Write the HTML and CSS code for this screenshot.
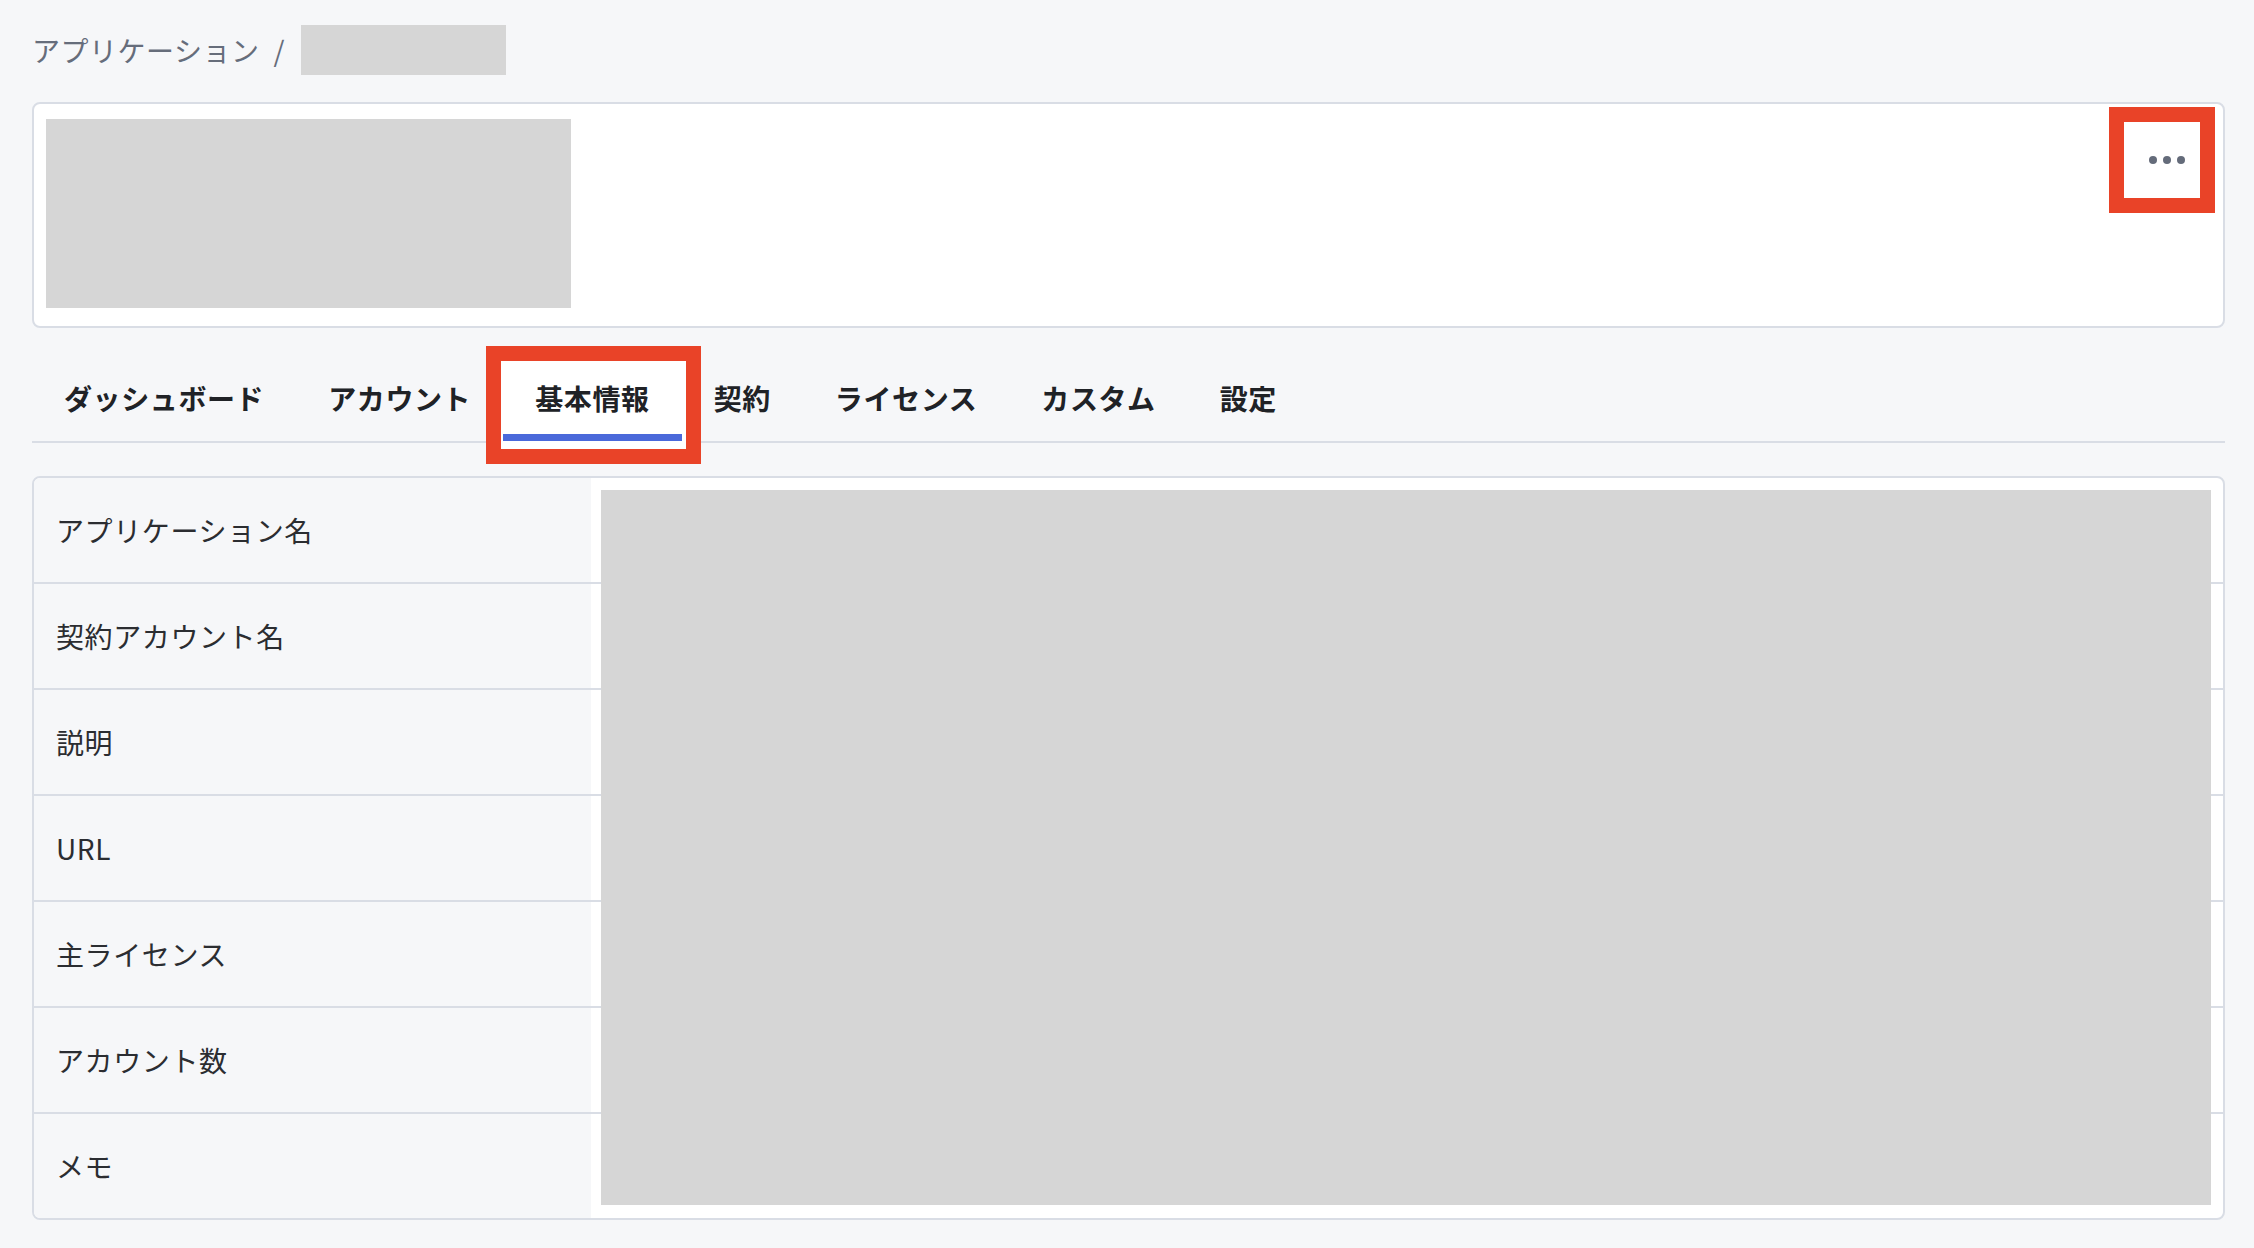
FILE: index.html
```html
<!DOCTYPE html>
<html lang="ja">
<head>
    <meta charset="UTF-8">
    <meta name="viewport" content="width=device-width, initial-scale=1.0">
    <title>アプリケーション - 基本情報</title>
    <link rel="stylesheet" href="styles.css">
</head>
<body>
    <div class="page">
        <nav class="breadcrumb">
            <a href="#" class="crumb">アプリケーション</a>
            <span class="sep">/</span>
            <span class="redacted crumb-name"></span>
        </nav>

        <div class="app-header">
            <div class="redacted app-logo"></div>
            <button class="more-btn" aria-label="その他">
                <svg width="36" height="10" viewBox="0 0 36 10">
                    <circle cx="4" cy="5" r="4" />
                    <circle cx="18" cy="5" r="4" />
                    <circle cx="32" cy="5" r="4" />
                </svg>
            </button>
        </div>

        <ul class="tabs">
            <li class="tab">ダッシュボード</li>
            <li class="tab">アカウント</li>
            <li class="tab active">基本情報</li>
            <li class="tab">契約</li>
            <li class="tab">ライセンス</li>
            <li class="tab">カスタム</li>
            <li class="tab">設定</li>
        </ul>

        <div class="info-table">
            <div class="info-row"><div class="info-label">アプリケーション名</div><div class="info-value"></div></div>
            <div class="info-row"><div class="info-label">契約アカウント名</div><div class="info-value"></div></div>
            <div class="info-row"><div class="info-label">説明</div><div class="info-value"></div></div>
            <div class="info-row"><div class="info-label">URL</div><div class="info-value"></div></div>
            <div class="info-row"><div class="info-label">主ライセンス</div><div class="info-value"></div></div>
            <div class="info-row"><div class="info-label">アカウント数</div><div class="info-value"></div></div>
            <div class="info-row"><div class="info-label">メモ</div><div class="info-value"></div></div>
            <div class="redacted values-cover"></div>
        </div>
    </div>
</body>
</html>
```

FILE: styles.css
```css
:root {
    --bg: #f6f7f9;
    --card: #ffffff;
    --border: #d9dde5;
    --redacted: #d6d6d6;
    --text: #2b2d31;
    --text-gray: #666d7b;
    --accent: #4b69da;
    --mark: #e94328;
}

* {
    margin: 0;
    padding: 0;
    box-sizing: border-box;
}

body {
    font-family: "Noto Sans CJK JP", "Noto Sans", sans-serif;
    background-color: var(--bg);
    color: var(--text);
    min-height: 100vh;
}

.page {
    padding: 0 29px 0 32px;
}

.redacted {
    background-color: var(--redacted);
}

/* breadcrumb */
.breadcrumb {
    display: flex;
    align-items: center;
    gap: 14px;
    height: 100px;
    font-size: 28px;
    line-height: 40px;
    letter-spacing: 0.5px;
    color: var(--text-gray);
}

.crumb {
    color: var(--text-gray);
    text-decoration: none;
}

.crumb-name {
    width: 205px;
    height: 50px;
    margin-left: 2px;
}

/* header card */
.app-header {
    display: flex;
    justify-content: space-between;
    align-items: flex-start;
    height: 226px;
    margin-top: 2px;
    padding: 15px 23px 18px 12px;
    background-color: var(--card);
    border: 2px solid var(--border);
    border-radius: 8px;
}

.app-logo {
    width: 525px;
    height: 189px;
}

.more-btn {
    display: flex;
    align-items: center;
    justify-content: center;
    width: 76px;
    height: 76px;
    margin-top: 3px;
    padding-left: 10px;
    background-color: var(--card);
    border: none;
    cursor: pointer;
    outline: 15px solid var(--mark);
}

.more-btn svg {
    fill: #646b7a;
}

/* tabs */
.tabs {
    display: flex;
    list-style: none;
    margin-top: 33px;
    border-bottom: 2px solid var(--border);
}

.tab {
    position: relative;
    z-index: 0;
    padding: 18px 32px 24px;
    font-size: 28px;
    line-height: 38px;
    font-weight: 700;
    letter-spacing: 0.6px;
    color: #202226;
    cursor: pointer;
}

/* white area + red highlight frame */
.tab.active::before {
    content: "";
    position: absolute;
    top: -15px;
    left: -17px;
    right: -19px;
    bottom: -23px;
    border: 15px solid var(--mark);
    background-color: var(--card);
    z-index: -1;
}

.tab.active::after {
    content: "";
    position: absolute;
    left: 0;
    right: 0;
    bottom: 0;
    height: 7px;
    background-color: var(--accent);
}

/* info table */
.info-table {
    position: relative;
    margin-top: 33px;
    background-color: var(--card);
    border: 2px solid var(--border);
    border-radius: 8px;
    overflow: hidden;
}

.info-row {
    display: flex;
    height: 104px;
}

.info-row + .info-row {
    height: 106px;
    border-top: 2px solid var(--border);
}

.info-label {
    display: flex;
    align-items: center;
    width: 557px;
    padding-left: 22px;
    background-color: var(--bg);
    font-size: 28px;
    line-height: 40px;
    letter-spacing: 0.6px;
}

.info-value {
    flex: 1;
}

.values-cover {
    position: absolute;
    top: 12px;
    left: 567px;
    right: 12px;
    bottom: 13px;
}
```
